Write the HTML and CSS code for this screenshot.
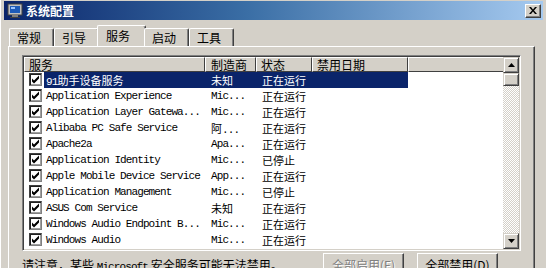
FILE: index.html
```html
<!DOCTYPE html>
<html lang="zh-CN">
<head>
    <meta charset="UTF-8">
    <title>系统配置</title>
    <link rel="stylesheet" href="styles.css">
</head>
<body>
    <div class="window">
        <div class="titlebar">
            <svg class="app-icon" width="16" height="16" viewBox="0 0 16 16">
                <rect x="1" y="1" width="14" height="11" fill="#c0c0c0" stroke="#404040"/>
                <rect x="3" y="3" width="10" height="7" fill="#1e5bb8"/>
                <rect x="4" y="4" width="4" height="2" fill="#9cc4ff"/>
                <rect x="5" y="12" width="6" height="2" fill="#808080"/>
                <rect x="3" y="14" width="10" height="1" fill="#404040"/>
            </svg>
            <span class="title">系统配置</span>
            <button class="close-btn">
                <svg width="8" height="7" viewBox="0 0 8 7"><path d="M0 0h2l2 2.5L6 0h2L5 3.5 8 7H6L4 4.5 2 7H0l3-3.5z" fill="#000"/></svg>
            </button>
        </div>

        <div class="tabs">
            <div class="tab">常规</div>
            <div class="tab">引导</div>
            <div class="tab active">服务</div>
            <div class="tab">启动</div>
            <div class="tab">工具</div>
        </div>

        <div class="panel">
            <div class="listview">
                <div class="list">
                    <div class="header">
                        <div class="hcell col-name">服务</div>
                        <div class="hcell col-maker">制造商</div>
                        <div class="hcell col-status">状态</div>
                        <div class="hcell col-date">禁用日期</div>
                        <div class="hcell col-rest"></div>
                    </div>

                    <div class="row selected">
                        <span class="check"><svg width="9" height="9" viewBox="0 0 9 9"><path d="M1 3.5l2 2 5-5v3L3 8.5 1 6.5z" fill="#000"/></svg></span>
                        <div class="cells">
                            <span class="cell col-name"><span class="en">91</span>助手设备服务</span>
                            <span class="cell col-maker">未知</span>
                            <span class="cell col-status">正在运行</span>
                        </div>
                    </div>
                    <div class="row">
                        <span class="check"><svg width="9" height="9" viewBox="0 0 9 9"><path d="M1 3.5l2 2 5-5v3L3 8.5 1 6.5z" fill="#000"/></svg></span>
                        <div class="cells">
                            <span class="cell col-name en">Application Experience</span>
                            <span class="cell col-maker en">Mic...</span>
                            <span class="cell col-status">正在运行</span>
                        </div>
                    </div>
                    <div class="row">
                        <span class="check"><svg width="9" height="9" viewBox="0 0 9 9"><path d="M1 3.5l2 2 5-5v3L3 8.5 1 6.5z" fill="#000"/></svg></span>
                        <div class="cells">
                            <span class="cell col-name en">Application Layer Gatewa...</span>
                            <span class="cell col-maker en">Mic...</span>
                            <span class="cell col-status">正在运行</span>
                        </div>
                    </div>
                    <div class="row">
                        <span class="check"><svg width="9" height="9" viewBox="0 0 9 9"><path d="M1 3.5l2 2 5-5v3L3 8.5 1 6.5z" fill="#000"/></svg></span>
                        <div class="cells">
                            <span class="cell col-name en">Alibaba PC Safe Service</span>
                            <span class="cell col-maker">阿<span class="en">...</span></span>
                            <span class="cell col-status">正在运行</span>
                        </div>
                    </div>
                    <div class="row">
                        <span class="check"><svg width="9" height="9" viewBox="0 0 9 9"><path d="M1 3.5l2 2 5-5v3L3 8.5 1 6.5z" fill="#000"/></svg></span>
                        <div class="cells">
                            <span class="cell col-name en">Apache2a</span>
                            <span class="cell col-maker en">Apa...</span>
                            <span class="cell col-status">正在运行</span>
                        </div>
                    </div>
                    <div class="row">
                        <span class="check"><svg width="9" height="9" viewBox="0 0 9 9"><path d="M1 3.5l2 2 5-5v3L3 8.5 1 6.5z" fill="#000"/></svg></span>
                        <div class="cells">
                            <span class="cell col-name en">Application Identity</span>
                            <span class="cell col-maker en">Mic...</span>
                            <span class="cell col-status">已停止</span>
                        </div>
                    </div>
                    <div class="row">
                        <span class="check"><svg width="9" height="9" viewBox="0 0 9 9"><path d="M1 3.5l2 2 5-5v3L3 8.5 1 6.5z" fill="#000"/></svg></span>
                        <div class="cells">
                            <span class="cell col-name en">Apple Mobile Device Service</span>
                            <span class="cell col-maker en">App...</span>
                            <span class="cell col-status">正在运行</span>
                        </div>
                    </div>
                    <div class="row">
                        <span class="check"><svg width="9" height="9" viewBox="0 0 9 9"><path d="M1 3.5l2 2 5-5v3L3 8.5 1 6.5z" fill="#000"/></svg></span>
                        <div class="cells">
                            <span class="cell col-name en">Application Management</span>
                            <span class="cell col-maker en">Mic...</span>
                            <span class="cell col-status">已停止</span>
                        </div>
                    </div>
                    <div class="row">
                        <span class="check"><svg width="9" height="9" viewBox="0 0 9 9"><path d="M1 3.5l2 2 5-5v3L3 8.5 1 6.5z" fill="#000"/></svg></span>
                        <div class="cells">
                            <span class="cell col-name en">ASUS Com Service</span>
                            <span class="cell col-maker">未知</span>
                            <span class="cell col-status">正在运行</span>
                        </div>
                    </div>
                    <div class="row">
                        <span class="check"><svg width="9" height="9" viewBox="0 0 9 9"><path d="M1 3.5l2 2 5-5v3L3 8.5 1 6.5z" fill="#000"/></svg></span>
                        <div class="cells">
                            <span class="cell col-name en">Windows Audio Endpoint B...</span>
                            <span class="cell col-maker en">Mic...</span>
                            <span class="cell col-status">正在运行</span>
                        </div>
                    </div>
                    <div class="row">
                        <span class="check"><svg width="9" height="9" viewBox="0 0 9 9"><path d="M1 3.5l2 2 5-5v3L3 8.5 1 6.5z" fill="#000"/></svg></span>
                        <div class="cells">
                            <span class="cell col-name en">Windows Audio</span>
                            <span class="cell col-maker en">Mic...</span>
                            <span class="cell col-status">正在运行</span>
                        </div>
                    </div>
                </div>

                <div class="scrollbar">
                    <div class="sb-btn">
                        <svg width="7" height="4" viewBox="0 0 7 4"><path d="M3.5 0L7 4H0z" fill="#000"/></svg>
                    </div>
                    <div class="sb-thumb"></div>
                    <div class="sb-track"></div>
                    <div class="sb-btn">
                        <svg width="7" height="4" viewBox="0 0 7 4"><path d="M0 0h7L3.5 4z" fill="#000"/></svg>
                    </div>
                </div>
            </div>

            <div class="footer">
                <div class="note">请注意，某些 <span class="en">Microsoft</span> 安全服务可能无法禁用。</div>
                <div class="buttons">
                    <button class="btn" disabled>全部启用(E)</button>
                    <button class="btn">全部禁用(D)</button>
                </div>
            </div>
        </div>
    </div>
</body>
</html>
```

FILE: styles.css
```css
body {
    margin: 0;
    width: 546px;
    height: 268px;
    overflow: hidden;
    background-color: #d4d0c8;
    font-family: "Noto Sans CJK SC", "Liberation Sans", sans-serif;
    font-size: 12px;
    color: #000;
}

.window {
    padding: 1px 3px 0 3px;
    height: 100%;
    box-sizing: border-box;
    border-left: 1px solid #fff;
}

/* barra de titulo */
.titlebar {
    height: 19px;
    display: flex;
    align-items: center;
    padding: 0 2px 0 3px;
    background: linear-gradient(90deg, #0a246a 0%, #3a6ea5 45%, #a6caf0 100%);
}

.app-icon {
    flex: none;
}

.title {
    margin-left: 3px;
    color: #fff;
    font-weight: 700;
    font-size: 12px;
    line-height: 19px;
    flex: 1;
}

.close-btn {
    width: 16px;
    height: 14px;
    padding: 0;
    display: flex;
    align-items: center;
    justify-content: center;
    background-color: #d4d0c8;
    border: 1px solid;
    border-color: #fff #404040 #404040 #fff;
    box-shadow: inset -1px -1px 0 #808080;
}

/* abas */
.tabs {
    display: flex;
    align-items: flex-end;
    height: 21px;
    margin-top: 5px;
    padding-left: 5px;
    position: relative;
    z-index: 1;
}

.tab {
    width: 45px;
    height: 18px;
    box-sizing: border-box;
    padding-left: 7px;
    line-height: 17px;
    border-top: 1px solid #fff;
    border-left: 1px solid #fff;
    border-right: 1px solid #404040;
    box-shadow: inset -1px 0 0 #808080;
    border-radius: 2px 2px 0 0;
    background-color: #d4d0c8;
}

.tab.active {
    height: 21px;
    width: 49px;
    margin: 0 -2px 0 -2px;
    padding-left: 8px;
    line-height: 19px;
}

/* painel */
.panel {
    margin: 0 8px 0 4px;
    height: 230px;
    box-sizing: border-box;
    border-top: 1px solid #fff;
    border-left: 1px solid #fff;
    border-right: 1px solid #404040;
    box-shadow: inset -1px 0 0 #808080;
    padding: 8px 13px 0 13px;
}

.listview {
    display: flex;
    height: 196px;
    box-sizing: border-box;
    border: 1px solid;
    border-color: #808080 #fff #fff #808080;
    box-shadow: inset 1px 1px 0 #404040, inset -1px -1px 0 #d4d0c8;
    padding: 1px;
    background-color: #fff;
}

.list {
    flex: 1;
    overflow: hidden;
}

.header {
    display: flex;
    height: 15px;
    background-color: #d4d0c8;
}

.hcell {
    box-sizing: border-box;
    height: 15px;
    line-height: 14px;
    padding-left: 4px;
    border-top: 1px solid #fff;
    border-left: 1px solid #fff;
    border-right: 1px solid #404040;
    border-bottom: 1px solid #404040;
    white-space: nowrap;
    overflow: hidden;
}

.header .col-name { width: 181px; }
.header .col-maker { width: 51px; padding-left: 5px; }
.header .col-status { width: 56px; padding-left: 4px; }
.header .col-date { width: 96px; padding-left: 4px; }
.header .col-rest { flex: 1; border-right: none; }

.row {
    display: flex;
    height: 16px;
    line-height: 16px;
}

.check {
    flex: none;
    width: 13px;
    height: 13px;
    margin: 1px 2px 0 5px;
    box-sizing: border-box;
    border: 1px solid;
    border-color: #404040 #808080 #808080 #404040;
    box-shadow: inset 1px 1px 0 #202020, inset -1px -1px 0 #a0a0a0;
    background-color: #fff;
    display: flex;
    align-items: center;
    justify-content: center;
}

.cells {
    display: flex;
    width: 364px;
    margin-left: 0;
}

.row.selected .cells {
    background-color: #0a246a;
    color: #fff;
}

.cell {
    white-space: nowrap;
    overflow: hidden;
    font-size: 11px;
}

.cells .col-name { width: 159px; padding-left: 2px; }
.cells .col-maker { width: 45px; padding-left: 6px; }
.cells .col-status { width: 50px; padding-left: 6px; }

.en {
    font-family: "Liberation Mono", monospace;
    font-size: 11px;
    letter-spacing: -0.9px;
}

/* barra de rolagem */
.scrollbar {
    width: 16px;
    display: flex;
    flex-direction: column;
    background: repeating-conic-gradient(#d4d0c8 0 25%, #fff 0 50%) 0 0 / 2px 2px;
}

.sb-btn,
.sb-thumb {
    height: 16px;
    box-sizing: border-box;
    background-color: #d4d0c8;
    border: 1px solid;
    border-color: #d4d0c8 #404040 #404040 #d4d0c8;
    box-shadow: inset 1px 1px 0 #fff, inset -1px -1px 0 #808080;
    display: flex;
    align-items: center;
    justify-content: center;
}

.sb-thumb {
    height: 13px;
}

.sb-track {
    flex: 1;
}

/* rodape */
.footer {
    display: flex;
    align-items: flex-start;
    margin-top: 2px;
    padding-right: 23px;
}

.note {
    flex: 1;
    font-size: 12px;
    line-height: 16px;
    margin-top: 4px;
    padding-left: 0;
}

.note .en {
    font-size: 11px;
}

.buttons {
    display: flex;
    gap: 13px;
}

.btn {
    width: 81px;
    height: 23px;
    font-family: "Noto Sans CJK SC", "Liberation Sans", sans-serif;
    font-size: 12px;
    background-color: #d4d0c8;
    border: 1px solid;
    border-color: #fff #404040 #404040 #fff;
    box-shadow: inset -1px -1px 0 #808080;
    color: #000;
    padding: 0;
}

.btn:disabled {
    color: #808080;
    text-shadow: 1px 1px 0 #fff;
}
```
